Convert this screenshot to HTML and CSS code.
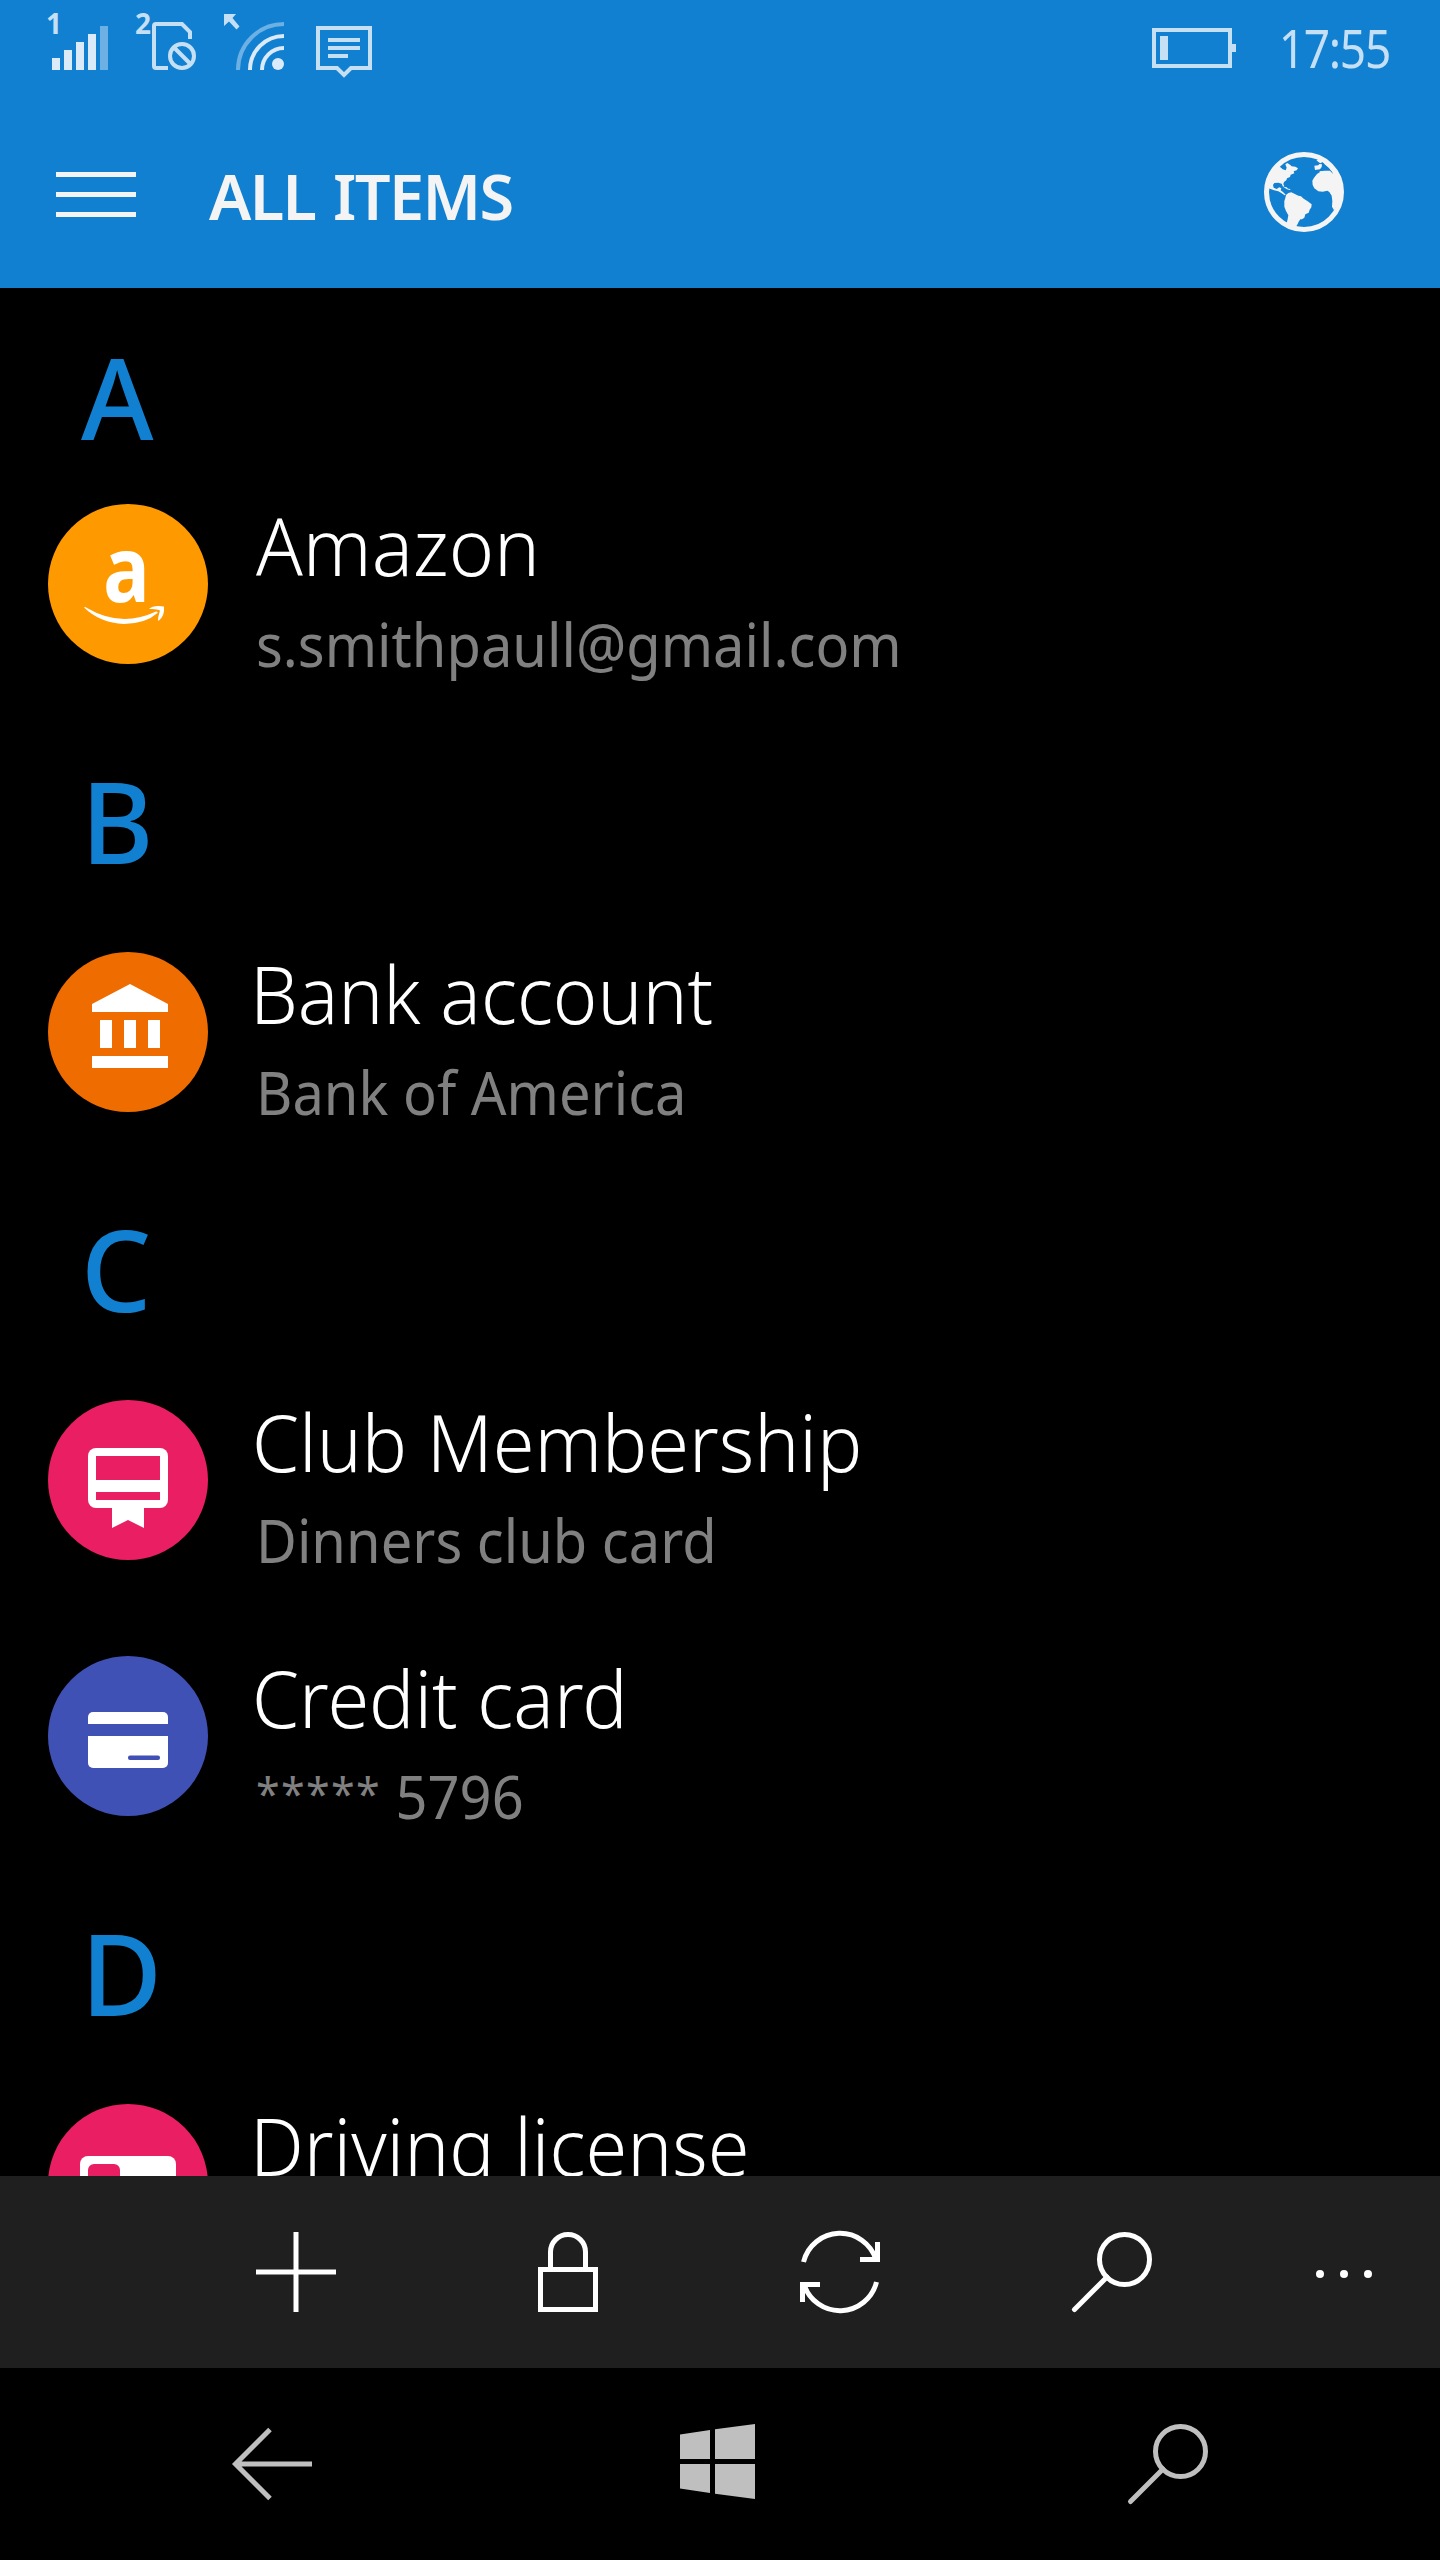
FILE: index.html
```html
<!DOCTYPE html>
<html lang="en">
  <head>
    <meta charset="UTF-8" />
    <meta name="viewport" content="width=device-width, initial-scale=1.0" />
    <title>All items</title>
    <link rel="stylesheet" href="styles.css">
  </head>
  <body>
    <header>
      <div class="status">
        <svg class="status-icons" width="340" height="90" viewBox="40 0 340 90">
          <!-- signal -->
          <text x="46" y="34" class="sim-number">1</text>
          <g fill="#dbeaf8">
            <rect x="52" y="58" width="8" height="12" />
            <rect x="64" y="50" width="8" height="20" />
            <rect x="76" y="42" width="8" height="28" />
            <rect x="88" y="34" width="8" height="36" />
            <rect x="100" y="26" width="8" height="44" fill="#6cb0e4" />
          </g>
          <!-- no sim -->
          <text x="135" y="34" class="sim-number">2</text>
          <g fill="none" stroke="#c5dff4" stroke-width="4">
            <path d="M190 39V32L182 24H156Q154 24 154 26V66Q154 68 156 68H168" />
            <circle cx="182" cy="56" r="12" />
            <path d="M174 47.500L190.500 64" />
          </g>
          <!-- wifi -->
          <path d="M224 14H236L232.500 18L239.500 26.500L236.500 29.500L229 21.500L224 26Z" fill="#c5dff4" />
          <g fill="none" stroke="#dbeaf8" stroke-width="4">
            <path d="M238 70A46 46 0 0 1 284 24" stroke="#6cb0e4" />
            <path d="M250 70A34 34 0 0 1 284 36" />
            <path d="M262 70A22 22 0 0 1 284 48" />
          </g>
          <circle cx="278" cy="64" r="6" fill="#dbeaf8" />
          <!-- message -->
          <path d="M318 28H370V68H351L344 75L337 68H318Z M328 40H360 M328 48H360 M328 56H348" fill="none" stroke="#c5dff4" stroke-width="4" />
        </svg>
        <svg class="battery" width="84" height="40" viewBox="0 0 84 40">
          <rect x="2" y="2" width="76" height="36" fill="none" stroke="#c5dff4" stroke-width="4" />
          <path d="M8 8H16V32H8Z M80 16H84V24H80Z" fill="#c5dff4" />
        </svg>
        <span class="time">17:55</span>
      </div>
      <div class="app-bar">
        <svg class="menu" width="80" height="45" viewBox="0 0 80 45" fill="#f4f4f4">
          <rect width="80" height="5" />
          <rect y="20" width="80" height="5" />
          <rect y="40" width="80" height="5" />
        </svg>
        <h1>ALL ITEMS</h1>
        <svg class="globe" width="80" height="80" viewBox="0 0 240 240" fill="#f4f4f4">
          <circle cx="120" cy="120" r="112.500" fill="none" stroke="#f4f4f4" stroke-width="15" />
          <path d="M46 43L56 52L65 55L68 47L64 37L70 33L78 38L83 43L94 44L102 49L98 55L89 58L91 64L80 68L78 75L69 79L67 85L60 90L58 96L61 103L57 104L53 95L43 92L31 93L27 99L29 107L38 111L46 106L52 109L50 115L57 120L65 128L62 130L52 123L43 118L30 115L14 109L12 80Z" />
          <path d="M57 104L68 106L72 110L80 111L77 114L69 112Z" />
          <path d="M66 129L73 123L82 121L91 125L103 131L111 133L119 140L130 147L143 157L142 166L137 173L134 182L124 187L121 197L114 202L109 202L104 209L101 216L96 224L78 224L68 214L71 201L73 190L66 177L61 164L61 147L64 138Z" />
          <path d="M157 24L164 31L170 34L176 29L182 37L195 48L204 59L207 66L198 56L183 56L166 58L168 60L159 66L150 77L145 86L146 99L151 109L163 118L176 119L190 116L196 120L203 131L205 147L204 164L210 175L222 157L231 134L229 94L216 62L195 37L167 21Z" />
          <path d="M151 41L163 40L166 36L174 37L173 45L168 52L153 54Z" />
        </svg>
      </div>
    </header>

    <main>
      <h2 class="first">A</h2>
      <div class="item amazon">
        <svg class="icon" viewBox="0 0 160 160">
          <circle cx="80" cy="80" r="80" fill="#ff9900" />
          <text x="55" y="98" textLength="47" lengthAdjust="spacingAndGlyphs" class="logo-letter">a</text>
          <path d="M36 103.500Q37 102.500 39 104Q73 124 108 107.500Q110 107 109.500 109Q98 119.500 76 120Q52 119 36 103.500Z M101 105Q105 101 116 102.500Q117 112 110.500 117Q109 116.500 112 106.500Q109 104.500 101 105Z" fill="#fff" />
        </svg>
        <div class="text">
          <h3>Amazon</h3>
          <p>s.smithpaull@gmail.com</p>
        </div>
      </div>

      <h2>B</h2>
      <div class="item bank">
        <svg class="icon" viewBox="0 0 160 160">
          <circle cx="80" cy="80" r="80" fill="#ef6c00" />
          <path d="M82 32L120 52V60H44V52Z M52 68H64V96H52Z M76 68H88V96H76Z M100 68H112V96H100Z M44 104H120V116H44Z" fill="#fff" />
        </svg>
        <div class="text">
          <h3>Bank account</h3>
          <p>Bank of America</p>
        </div>
      </div>

      <h2>C</h2>
      <div class="item club">
        <svg class="icon" viewBox="0 0 160 160">
          <circle cx="80" cy="80" r="80" fill="#e91e63" />
          <rect x="40" y="48" width="80" height="60" rx="8" fill="#fff" />
          <path d="M64 104H96V128L80 120L64 128Z" fill="#fff" />
          <path d="M48 56H112V80H48Z M48 92H112V100H48Z" fill="#e91e63" />
        </svg>
        <div class="text">
          <h3>Club Membership</h3>
          <p>Dinners club card</p>
        </div>
      </div>
      <div class="item credit">
        <svg class="icon" viewBox="0 0 160 160">
          <circle cx="80" cy="80" r="80" fill="#3f51b5" />
          <rect x="40" y="56" width="80" height="56" rx="5" fill="#fff" />
          <path d="M40 68H120V80H40Z" fill="#3f51b5" />
          <rect x="80" y="99.500" width="32" height="4.500" rx="2" fill="#3f51b5" />
        </svg>
        <div class="text">
          <h3>Credit card</h3>
          <p><span class="stars">*****</span> 5796</p>
        </div>
      </div>

      <h2>D</h2>
      <div class="item driving">
        <svg class="icon" viewBox="0 0 160 160">
          <circle cx="80" cy="80" r="80" fill="#e91e63" />
          <rect x="32" y="52" width="96" height="64" rx="8" fill="#fff" />
          <rect x="40" y="60" width="32" height="32" rx="6" fill="#e91e63" />
        </svg>
        <div class="text">
          <h3>Driving license</h3>
        </div>
      </div>
    </main>

    <div class="command-bar">
      <svg width="80" height="80" viewBox="0 0 80 80">
        <path d="M0 40H80M40 0V80" />
      </svg>
      <svg width="60" height="80" viewBox="0 0 60 80">
        <path d="M2.500 37.500H57.500V77.500H2.500Z M12.500 37V20A17.500 17.500 0 0 1 47.500 20V37" />
      </svg>
      <svg width="80" height="80" viewBox="0 0 80 80">
        <path d="M3.500 30A37.700 37.700 0 0 1 76 27.500M77.500 10V27.500H60M76.500 50A37.700 37.700 0 0 1 4 52.500M2.500 70V52.500H20" />
      </svg>
      <svg width="80" height="80" viewBox="0 0 80 80">
        <circle cx="52.500" cy="27.500" r="25" />
        <path d="M35 45L2.500 77.500" stroke-linecap="round" />
      </svg>
      <svg class="more" width="56" height="8" viewBox="0 0 56 8">
        <circle cx="4" cy="4" r="4" />
        <circle cx="28" cy="4" r="4" />
        <circle cx="52" cy="4" r="4" />
      </svg>
    </div>

    <nav>
      <svg width="80" height="80" viewBox="0 0 80 80">
        <path d="M38 5.500L3.500 40L38 74.500M4 40H80" />
      </svg>
      <svg class="windows" width="75" height="75" viewBox="0 0 75 75">
        <path d="M0 10.500L30 6V35H0Z M35 5.200L75 0V35H35Z M0 40H30V69L0 64.500Z M35 40H75V75L35 69.700Z" />
      </svg>
      <svg width="80" height="80" viewBox="0 0 80 80">
        <circle cx="52.500" cy="27.500" r="25" />
        <path d="M35 45L2.500 77.500" stroke-linecap="round" />
      </svg>
    </nav>
  </body>
</html>
```
FILE: styles.css
```css
body {
  margin: 0;
  width: 1440px;
  height: 2560px;
  display: flex;
  flex-direction: column;
  overflow: hidden;
  background: #000;
  font-family: "Noto Sans", "Open Sans", sans-serif;
}
svg {
  display: block;
  flex-shrink: 0;
  overflow: visible;
}
h1,
h2,
h3,
p {
  margin: 0;
  white-space: nowrap;
}
header {
  height: 288px;
  background: #1180d1;
}
.status {
  height: 96px;
  box-sizing: border-box;
  padding: 0 50px 0 40px;
  display: flex;
  align-items: flex-start;
}
.sim-number {
  font-size: 28px;
  font-weight: 700;
  fill: #c5dff4;
}
.battery {
  margin: 28px 22px 0 auto;
}
.time {
  width: 132px;
  text-align: right;
  font-size: 53px;
  line-height: 95px;
  letter-spacing: -1.5px;
  color: #c5dff4;
  transform: scaleX(0.87);
  transform-origin: right;
}
.app-bar {
  height: 192px;
  box-sizing: border-box;
  padding: 0 96px 0 56px;
  display: flex;
  align-items: center;
}
.menu {
  margin-top: 5px;
}
h1 {
  margin-left: 73px;
  padding-top: 7px;
  font-size: 63px;
  font-weight: 600;
  letter-spacing: -1.6px;
  word-spacing: 3px;
  color: #f4f4f4;
}
.globe {
  margin-left: auto;
}
main {
  height: 1888px;
  overflow: hidden;
}
h2 {
  height: 192px;
  box-sizing: border-box;
  padding: 0 0 24px 81px;
  display: flex;
  align-items: flex-end;
  font-size: 113px;
  font-weight: 500;
  line-height: 120px;
  color: #1180d1;
  transform: scaleX(0.98);
  transform-origin: 81px 0;
}
.first {
  height: 168px;
  padding-bottom: 0;
}
.item {
  height: 256px;
  padding-left: 48px;
  display: flex;
}
.icon {
  width: 160px;
  height: 160px;
  margin-top: 48px;
}
.logo-letter {
  font-family: "Open Sans", sans-serif;
  font-size: 91px;
  font-weight: 700;
  fill: #fff;
}
.text {
  padding: 38px 0 0 48px;
}
/* slightly narrowed text */
h3 {
  font-size: 79px;
  font-weight: 300;
  line-height: 104px;
  color: #fff;
  transform: scaleX(0.957);
  transform-origin: left;
}
.amazon h3 {
  transform: scaleX(0.975);
}
.bank h3,
.driving h3 {
  margin-left: -6px;
}
.club h3,
.credit h3 {
  margin-left: -4px;
}
p {
  margin-top: 6px;
  font-size: 60px;
  line-height: 80px;
  color: #808080;
  transform: scaleX(0.934);
  transform-origin: left;
}
.stars {
  font-size: 46px;
  line-height: 0;
  letter-spacing: 1.4px;
  vertical-align: 8px;
}
.command-bar {
  height: 192px;
  box-sizing: border-box;
  padding-left: 160px;
  display: grid;
  grid-template-columns: repeat(4, 272px) 192px;
  align-items: center;
  justify-items: center;
  background: #1f1f1f;
  fill: none;
  stroke: #fff;
  stroke-width: 5;
}
.more {
  margin-top: 4px;
  fill: #fff;
  stroke: none;
}
nav {
  height: 192px;
  box-sizing: border-box;
  padding: 0 232px;
  display: flex;
  align-items: center;
  justify-content: space-between;
  fill: none;
  stroke: #bfbfbf;
  stroke-width: 5;
}
.windows {
  margin: 0 5px 5px 0;
  fill: #bfbfbf;
  stroke: none;
}
```
